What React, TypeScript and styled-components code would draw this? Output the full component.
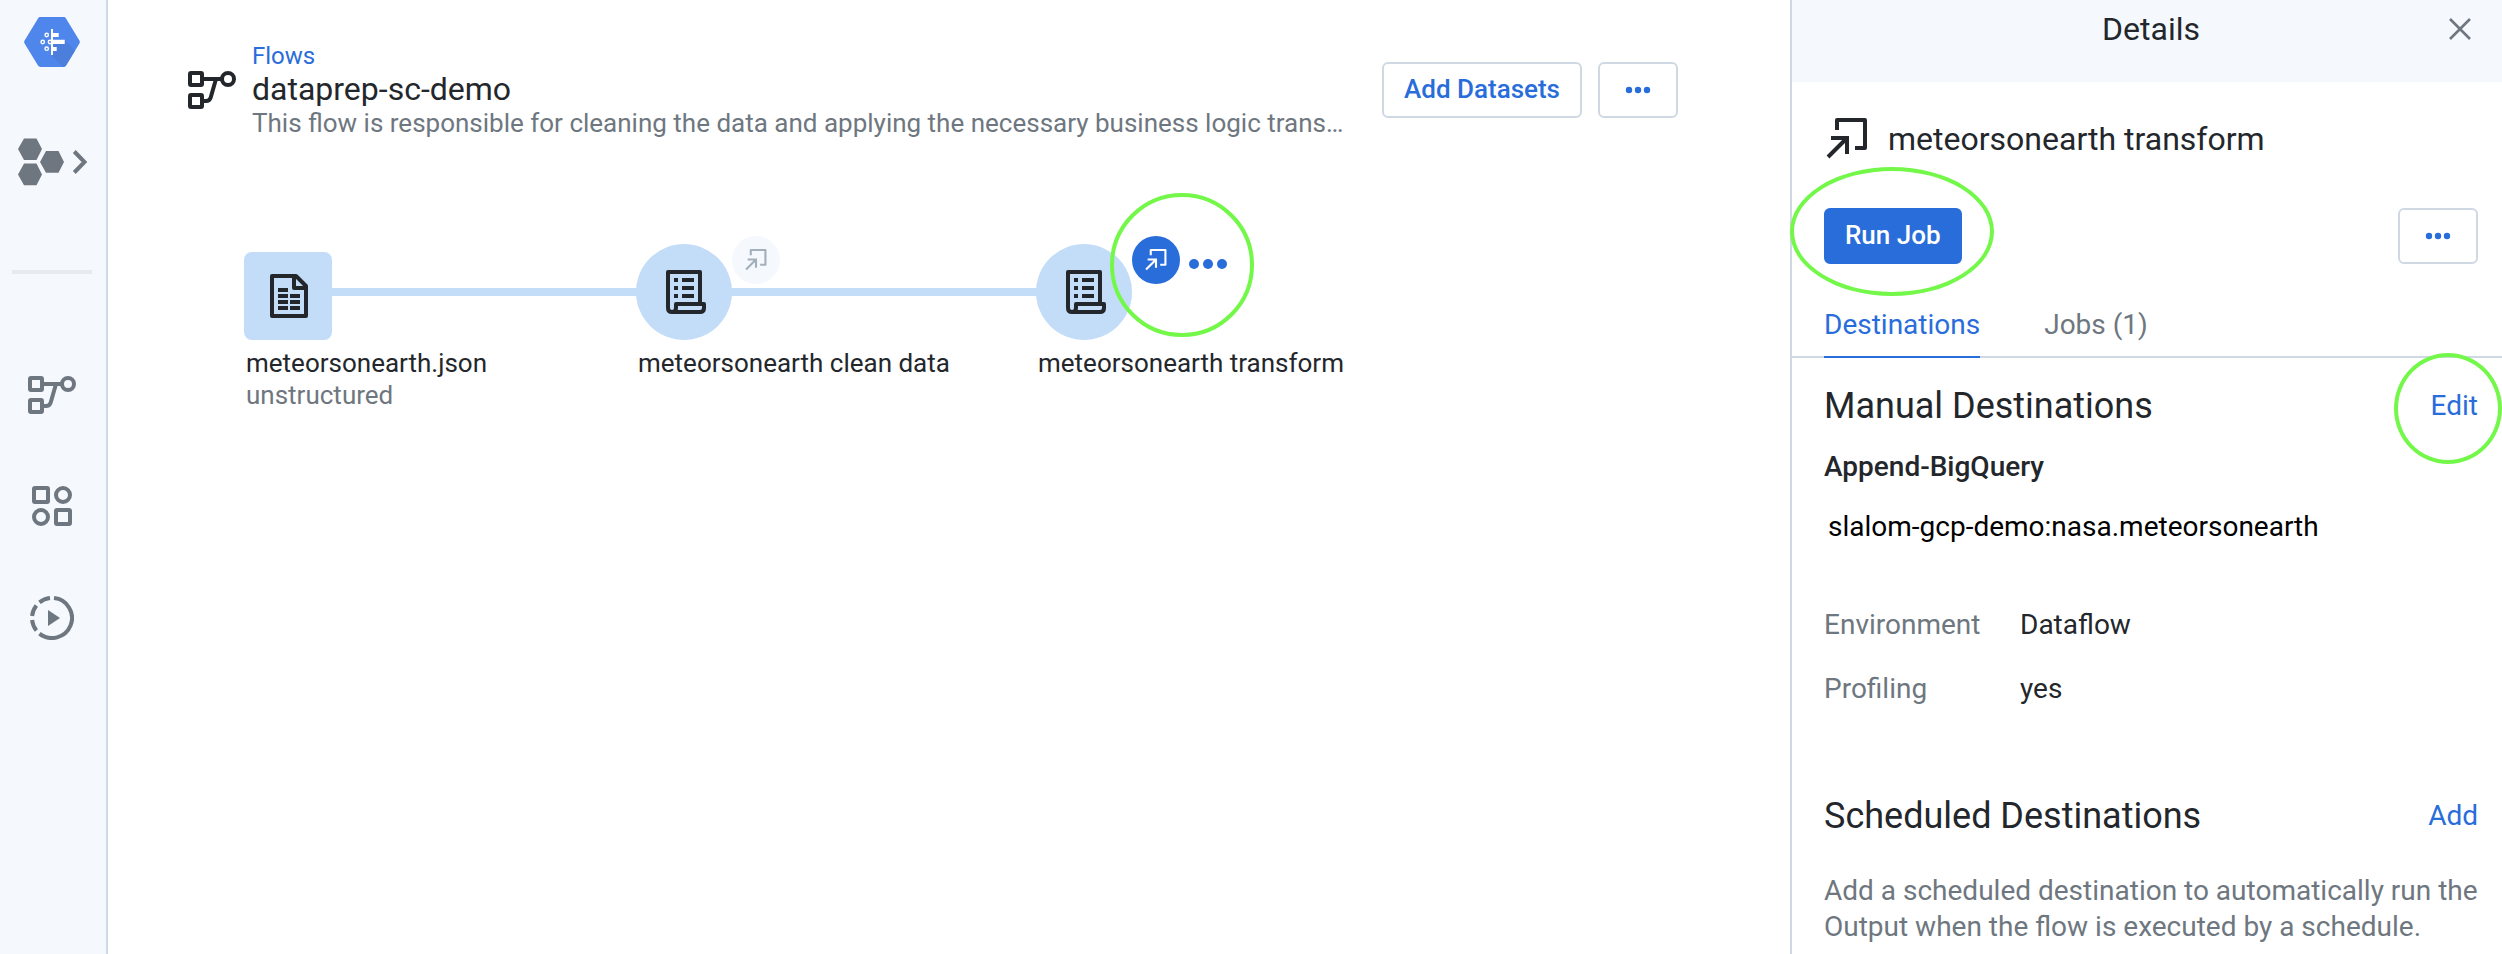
import React from "react";
import styled, { createGlobalStyle } from "styled-components";

const color = {
  ink: "#23272c",
  muted: "#6e7780",
  blue: "#296ddb",
  line: "#cfd8e3",
  tint: "#f5f8fd",
  node: "#c3ddf8",
  mark: "#73f84a",
};

const GlobalStyle = createGlobalStyle`
  *, *::before, *::after { box-sizing: border-box; }
  body {
    margin: 0;
    background: #fff;
    color: ${color.ink};
    font-family: Roboto, "Liberation Sans", sans-serif;
    font-size: 28px;
    line-height: 36px;
  }
  button { font: inherit; cursor: pointer; }
  h1, h2, h3, p, dl, dd { margin: 0; font-weight: 400; }
  svg { display: block; flex: none; }
`;

const Page = styled.div`
  display: flex;
  min-height: 100vh;
`;

const Sidebar = styled.nav`
  display: flex;
  flex-direction: column;
  align-items: center;
  flex: none;
  width: 108px;
  padding: 17px 2px 0 0;
  background: ${color.tint};
  border-right: 2px solid ${color.line};
  color: ${color.muted};
`;

const NavLink = styled.a<{ $gap: number }>`
  display: block;
  margin-top: ${(p) => p.$gap}px;
  color: inherit;
`;

const Divider = styled.hr`
  width: 80px;
  height: 4px;
  margin: 84px 0 32px;
  border: 0;
  background: #e7ebf0;
`;

const Main = styled.main`
  display: flex;
  flex-direction: column;
  flex: 1;
  min-width: 0;
`;

const FlowHeader = styled.header`
  display: flex;
  align-items: center;
  gap: 16px;
  padding: 40px 112px 0 80px;
`;

const FlowTitle = styled.div`
  flex: 1;
  min-width: 0;
  margin-right: 24px;
`;

const Crumb = styled.a`
  display: block;
  width: fit-content;
  font-size: 24px;
  line-height: 32px;
  color: ${color.blue};
  text-decoration: none;
`;

const FlowName = styled.h1`
  font-size: 32px;
  line-height: 34px;
`;

const FlowNote = styled.p`
  font-size: 26px;
  line-height: 34px;
  color: ${color.muted};
  white-space: nowrap;
`;

const Button = styled.button<{ $primary?: boolean }>`
  display: flex;
  align-items: center;
  justify-content: center;
  flex: none;
  min-width: 80px;
  height: 56px;
  padding: 0 ${(p) => (p.$primary ? 19 : 20)}px 2px;
  border: 2px solid ${(p) => (p.$primary ? color.blue : color.line)};
  border-radius: 6px;
  background: ${(p) => (p.$primary ? color.blue : "#fff")};
  color: ${(p) => (p.$primary ? "#fff" : color.blue)};
  font-size: 26px;
  font-weight: 500;
`;

const IconButton = styled(Button)`
  padding-bottom: 0;
`;

const Canvas = styled.section`
  position: relative;
  flex: 1;
`;

const Link = styled.div<{ $x: number; $width: number }>`
  position: absolute;
  top: 148px;
  left: ${(p) => p.$x}px;
  width: ${(p) => p.$width}px;
  height: 8px;
  background: ${color.node};
`;

const Node = styled.div<{ $x: number; $y: number }>`
  position: absolute;
  left: ${(p) => p.$x}px;
  top: ${(p) => p.$y}px;
`;

const NodeShape = styled.div<{ $round?: boolean }>`
  display: flex;
  align-items: center;
  justify-content: center;
  width: ${(p) => (p.$round ? 96 : 88)}px;
  height: ${(p) => (p.$round ? 96 : 88)}px;
  padding-left: ${(p) => (p.$round ? 4 : 2)}px;
  border-radius: ${(p) => (p.$round ? "50%" : "8px")};
  background: ${color.node};
`;

const NodeLabel = styled.div`
  padding: 7px 0 0 2px;
  font-size: 26px;
  line-height: 32px;
  white-space: nowrap;
`;

const NodeKind = styled.div`
  color: ${color.muted};
`;

const NodeTools = styled.div`
  position: absolute;
  top: -8px;
  left: 96px;
  display: flex;
  align-items: center;
  gap: 8px;
`;

const OutputBadge = styled.button<{ $active?: boolean }>`
  display: flex;
  align-items: center;
  justify-content: center;
  width: 48px;
  height: 48px;
  padding: 0;
  border: 0;
  border-radius: 50%;
  background: ${(p) => (p.$active ? color.blue : color.tint)};
  color: ${(p) => (p.$active ? "#fff" : "#a3afba")};
`;

const PlainButton = styled.button`
  padding: 0;
  border: 0;
  background: none;
  color: ${color.blue};
`;

const ToolsMenuButton = styled(PlainButton)`
  padding-top: 8px;
`;

const Highlight = styled.span<{ $x: number; $y: number; $w: number; $h: number }>`
  position: absolute;
  left: ${(p) => p.$x}px;
  top: ${(p) => p.$y}px;
  width: ${(p) => p.$w}px;
  height: ${(p) => p.$h}px;
  border: 4px solid ${color.mark};
  border-radius: 50%;
  pointer-events: none;
`;

const Marked = styled.div`
  position: relative;
`;

const Panel = styled.aside`
  flex: none;
  width: 712px;
  border-left: 2px solid ${color.line};
`;

const PanelHeader = styled.header`
  display: grid;
  grid-template-columns: 32px 1fr 24px;
  align-items: center;
  padding: 0 30px 24px;
  background: ${color.tint};
  color: ${color.muted};
`;

const PanelTitle = styled.h2`
  grid-column: 2;
  font-size: 32px;
  line-height: 58px;
  text-align: center;
  color: ${color.ink};
`;

const OutputRow = styled.div`
  display: flex;
  align-items: center;
  gap: 20px;
  padding: 36px 24px 0 34px;
`;

const OutputName = styled.h3`
  font-size: 32px;
  line-height: 42px;
`;

const Actions = styled.div`
  display: flex;
  justify-content: space-between;
  padding: 48px 24px 0 32px;
`;

const Tabs = styled.div`
  display: flex;
  gap: 64px;
  margin-top: 43px;
  padding-left: 32px;
  border-bottom: 2px solid ${color.line};
`;

const Tab = styled.button<{ $active?: boolean }>`
  margin-bottom: -2px;
  padding: 0 0 13px;
  border: 0;
  border-bottom: 2px solid ${(p) => (p.$active ? color.blue : "transparent")};
  background: none;
  color: ${(p) => (p.$active ? color.blue : color.muted)};
`;

const Section = styled.section<{ $top: number }>`
  padding: ${(p) => p.$top}px 24px 0 32px;
`;

const SectionHead = styled.div`
  display: flex;
  align-items: center;
  justify-content: space-between;
`;

const SectionTitle = styled.h2`
  font-size: 36px;
  line-height: 44px;
`;

const DestinationKind = styled.h3`
  margin-top: 21px;
  font-size: 28px;
  font-weight: 500;
`;

const DestinationPath = styled.p`
  margin-top: 24px;
  padding-left: 4px;
  color: #000;
`;

const Settings = styled.dl`
  display: grid;
  grid-template-columns: 196px 1fr;
  row-gap: 28px;
  margin-top: 62px;
`;

const SettingName = styled.dt`
  color: ${color.muted};
`;

const Hint = styled.p`
  margin-top: 35px;
  color: ${color.muted};
`;

const LogoIcon = () => (
  <svg width="56" height="50" viewBox="0 0 56 50" aria-hidden="true">
    <path
      fill="#4f86ec"
      d="M16.5 0h23c1 0 2 .5 2.5 1.4l13.4 22.1c.6 1 .6 2 0 3L42 48.6c-.5.9-1.500 1.400-2.500 1.400h-23c-1 0-2-.5-2.500-1.400L.6 26.500c-.6-1-.6-2 0-3L14 1.400C14.500.5 15.500 0 16.500 0z"
    />
    <path fill="#4c7edc" d="M29 27h11.700V23L51 33.800 42 48.600c-.5.9-1.500 1.400-2.500 1.400L27 38z" />
    <path fill="#fff" d="M27 12h2v4h5.700v4H29v2.700h11.700v4.300H29v3h3.700v4H29v4h-2z" />
    <g fill="none" stroke="#fff" strokeWidth="1.400">
      <circle cx="22.700" cy="18" r="1.700" />
      <circle cx="18.700" cy="25" r="1.700" />
      <circle cx="26" cy="25" r="1.700" />
      <circle cx="22.700" cy="31.700" r="1.700" />
    </g>
  </svg>
);

const HexMenuIcon = () => (
  <svg width="68" height="48" viewBox="1 0 68 48" overflow="visible" fill="currentColor" aria-hidden="true">
    <path d="M1 11 7 .5h12.500L25 11l-5.500 11H7zM1 36.500l6-11h12.500l5.500 11-5.500 10.700H7zM23 24l6-11h12.500L47 24l-5.500 10.700H29z" />
    <path d="M57.300 13.500 67.500 24 57.300 34.500" fill="none" stroke="currentColor" strokeWidth="4" />
  </svg>
);

const FlowIcon = () => (
  <svg width="48" height="38" viewBox="0 0 48 38" fill="none" stroke="currentColor" strokeWidth="4" strokeLinejoin="round" aria-hidden="true">
    <rect x="2" y="2" width="12" height="12" rx="1" />
    <rect x="2" y="24" width="12" height="12" rx="1" />
    <circle cx="40" cy="8" r="6" />
    <path d="M15 8h18M15 30h3c2.500 0 4-1 4.700-3.500L28 8" />
  </svg>
);

const LibraryIcon = () => (
  <svg width="40" height="40" viewBox="0 0 40 40" fill="none" stroke="currentColor" strokeWidth="4" aria-hidden="true">
    <rect x="2" y="2" width="14" height="14" rx="1" />
    <circle cx="31" cy="9" r="7" />
    <circle cx="9" cy="31" r="7" />
    <rect x="24" y="24" width="14" height="14" rx="1" />
  </svg>
);

const JobsIcon = () => (
  <svg width="44" height="44" viewBox="0 0 44 44" fill="none" stroke="currentColor" strokeWidth="4" aria-hidden="true">
    <path d="M24 2.100A20 20 0 1 1 9.500 37.600M20 2.100A20 20 0 0 0 9.500 6.400M6.400 9.500A20 20 0 0 0 2.100 20M2.100 24A20 20 0 0 0 6.400 34.500" />
    <path d="M18 14v16l12-8z" fill="currentColor" stroke="none" />
  </svg>
);

const FileIcon = () => (
  <svg width="38" height="44" viewBox="0 0 38 44" fill="none" stroke="currentColor" strokeWidth="4" strokeLinejoin="round" aria-hidden="true">
    <path d="M2 2h24l10 10v30H2zM24 2v12h12" />
    <path d="M8 16h10M8 22h10M20 22h10M8 28h10M20 28h10M8 34h10M20 34h10" />
  </svg>
);

const RecipeIcon = () => (
  <svg width="40" height="44" viewBox="0 0 40 44" fill="none" stroke="currentColor" strokeWidth="4" strokeLinejoin="round" aria-hidden="true">
    <path d="M34 33V2H2v36c0 2.500 1.500 4 4 4h28c2.500 0 4-1.500 4-4v-4H10v4c0 2.500-1.500 4-4 4" />
    <path d="M8 10h4M16 10h12M8 18h4M16 18h12M8 26h4M16 26h12" />
  </svg>
);

const OutputIcon = ({ size }: { size: number }) => (
  <svg width={size} height={size} viewBox="0 0 42 42" fill="none" stroke="currentColor" strokeWidth="4" aria-hidden="true">
    <path d="M11 12V2h28v28H29" strokeLinejoin="round" />
    <path d="M5 20h16v16M2 39 21 20" />
  </svg>
);

const DotsIcon = ({ large }: { large?: boolean }) =>
  large ? (
    <svg width="40" height="10" viewBox="0 0 40 10" fill="currentColor" aria-hidden="true">
      <circle cx="6" cy="5" r="5" />
      <circle cx="20" cy="5" r="5" />
      <circle cx="34" cy="5" r="5" />
    </svg>
  ) : (
    <svg width="26" height="8" viewBox="0 0 26 8" fill="currentColor" aria-hidden="true">
      <circle cx="4" cy="4" r="3.200" />
      <circle cx="13" cy="4" r="3.200" />
      <circle cx="22" cy="4" r="3.200" />
    </svg>
  );

const CloseIcon = () => (
  <svg width="24" height="24" viewBox="0 0 24 24" fill="none" stroke={color.muted} strokeWidth="2.600" aria-hidden="true">
    <path d="M2 2l20 20M22 2 2 22" />
  </svg>
);

export default function App() {
  return (
    <>
      <GlobalStyle />
      <Page>
        <Sidebar aria-label="Main">
          <LogoIcon />
          <NavLink href="#menu" aria-label="Expand menu" $gap={71}>
            <HexMenuIcon />
          </NavLink>
          <Divider />
          <NavLink href="#flows" aria-label="Flows" $gap={70}>
            <FlowIcon />
          </NavLink>
          <NavLink href="#library" aria-label="Library" $gap={72}>
            <LibraryIcon />
          </NavLink>
          <NavLink href="#jobs" aria-label="Jobs" $gap={70}>
            <JobsIcon />
          </NavLink>
        </Sidebar>

        <Main>
          <FlowHeader>
            <FlowIcon />
            <FlowTitle>
              <Crumb href="#flows">Flows</Crumb>
              <FlowName>dataprep-sc-demo</FlowName>
              <FlowNote>
                This flow is responsible for cleaning the data and applying the necessary business logic trans…
              </FlowNote>
            </FlowTitle>
            <Button type="button">Add Datasets</Button>
            <IconButton type="button" aria-label="More flow actions">
              <DotsIcon />
            </IconButton>
          </FlowHeader>

          <Canvas aria-label="Flow">
            <Link $x={220} $width={312} />
            <Link $x={620} $width={312} />
            <Node $x={136} $y={112}>
              <NodeShape>
                <FileIcon />
              </NodeShape>
              <NodeLabel>
                meteorsonearth.json
                <NodeKind>unstructured</NodeKind>
              </NodeLabel>
            </Node>
            <Node $x={528} $y={104}>
              <NodeShape $round>
                <RecipeIcon />
              </NodeShape>
              <NodeLabel>meteorsonearth clean data</NodeLabel>
              <NodeTools>
                <OutputBadge type="button" aria-label="Output of clean data">
                  <OutputIcon size={22} />
                </OutputBadge>
              </NodeTools>
            </Node>
            <Node $x={928} $y={104}>
              <NodeShape $round>
                <RecipeIcon />
              </NodeShape>
              <NodeLabel>meteorsonearth transform</NodeLabel>
              <NodeTools>
                <OutputBadge type="button" aria-label="Output of transform" $active>
                  <OutputIcon size={22} />
                </OutputBadge>
                <ToolsMenuButton type="button" aria-label="More output actions">
                  <DotsIcon large />
                </ToolsMenuButton>
              </NodeTools>
            </Node>
            <Highlight $x={1002} $y={53} $w={144} $h={144} />
          </Canvas>
        </Main>

        <Panel>
          <PanelHeader>
            <PanelTitle>Details</PanelTitle>
            <PlainButton type="button" aria-label="Close">
              <CloseIcon />
            </PlainButton>
          </PanelHeader>

          <OutputRow>
            <OutputIcon size={42} />
            <OutputName>meteorsonearth transform</OutputName>
          </OutputRow>

          <Actions>
            <Marked>
              <Button type="button" $primary>
                Run Job
              </Button>
              <Highlight $x={-34} $y={-41} $w={204} $h={129} />
            </Marked>
            <IconButton type="button" aria-label="More job actions">
              <DotsIcon />
            </IconButton>
          </Actions>

          <Tabs role="tablist">
            <Tab type="button" role="tab" aria-selected="true" $active>
              Destinations
            </Tab>
            <Tab type="button" role="tab" aria-selected="false">
              Jobs (1)
            </Tab>
          </Tabs>

          <Section $top={26}>
            <SectionHead>
              <SectionTitle>Manual Destinations</SectionTitle>
              <Marked>
                <PlainButton type="button">Edit</PlainButton>
                <Highlight $x={-37} $y={-35} $w={108} $h={111} />
              </Marked>
            </SectionHead>
            <DestinationKind>Append-BigQuery</DestinationKind>
            <DestinationPath>slalom-gcp-demo:nasa.meteorsonearth</DestinationPath>
            <Settings>
              <SettingName>Environment</SettingName>
              <dd>Dataflow</dd>
              <SettingName>Profiling</SettingName>
              <dd>yes</dd>
            </Settings>
          </Section>

          <Section $top={87}>
            <SectionHead>
              <SectionTitle>Scheduled Destinations</SectionTitle>
              <PlainButton type="button">Add</PlainButton>
            </SectionHead>
            <Hint>
              Add a scheduled destination to automatically run the Output when the flow is executed by a schedule.
            </Hint>
          </Section>
        </Panel>
      </Page>
    </>
  );
}
